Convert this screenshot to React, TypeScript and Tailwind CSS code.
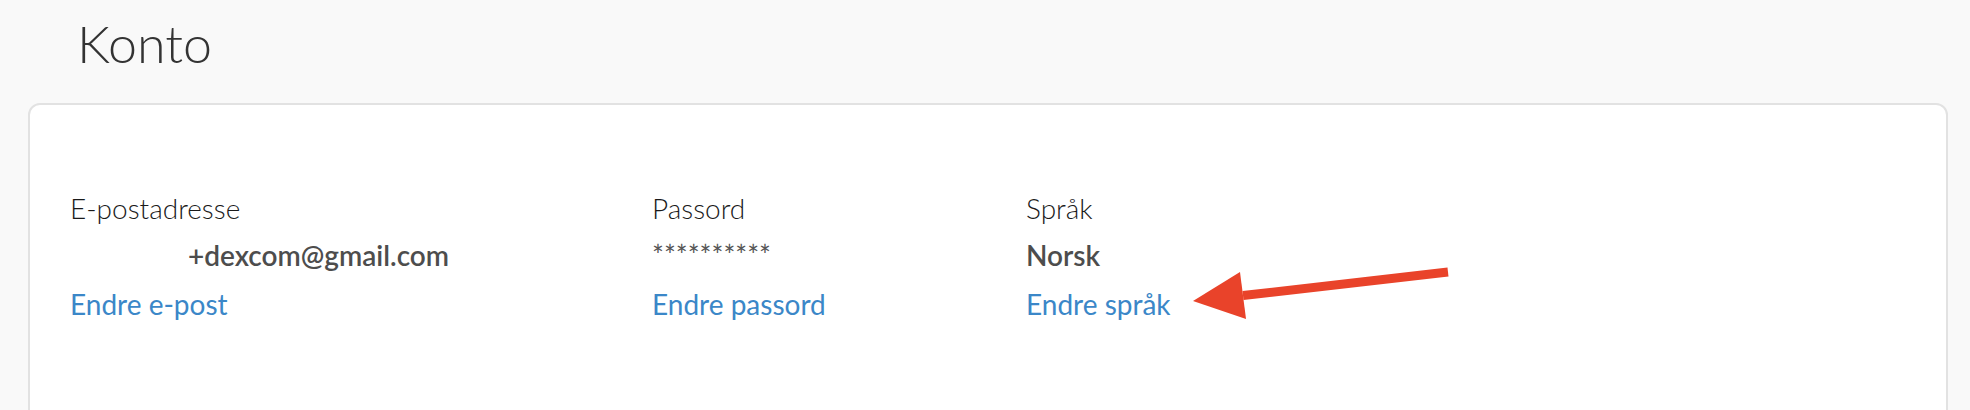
export default function App() {
  return (
    <div className="relative h-[410px] w-[1970px] overflow-hidden bg-[#f9f9f9] font-['Lato',sans-serif]">
      {/* Page title */}
      <h1 className="pl-[77px] pt-[13px] text-[52px] leading-[60px] font-light text-[#333333]">
        Konto
      </h1>

      {/* Account card */}
      <div className="mt-[30px] ml-[28px] mr-[22px] h-[320px] rounded-[12px] border-2 border-[#e2e2e2] bg-white pl-[40px] pt-[87px]">
        <div className="flex">
          <div className="w-[582px]">
            <p className="text-[28px] leading-[32px] font-light text-[#1a1a1a]">E-postadresse</p>
            <p className="mt-[15px] pl-[118px] text-[28px] leading-[32px] font-semibold text-[#4d4d4d]">
              +dexcom@gmail.com
            </p>
            <a className="mt-[17px] block text-[28px] leading-[32px] text-[#3b87c8]">Endre e-post</a>
          </div>

          <div className="w-[374px]">
            <p className="text-[28px] leading-[32px] font-light text-[#1a1a1a]">Passord</p>
            <p className="mt-[15px] text-[28px] leading-[32px] font-normal text-[#555555]">**********</p>
            <a className="mt-[17px] block text-[28px] leading-[32px] text-[#3b87c8]">Endre passord</a>
          </div>

          <div>
            <p className="text-[28px] leading-[32px] font-light text-[#1a1a1a]">Språk</p>
            <p className="mt-[15px] text-[28px] leading-[32px] font-semibold text-[#4d4d4d]">Norsk</p>
            <a className="mt-[17px] block text-[28px] leading-[32px] text-[#3b87c8]">Endre språk</a>
          </div>
        </div>
      </div>

      {/* Annotation arrow */}
      <svg className="pointer-events-none absolute left-0 top-0" width="1970" height="410">
        <line x1="1243" y1="295.5" x2="1448" y2="272" stroke="#e9432a" strokeWidth="9" />
        <polygon points="1193,301 1240,272 1246,319" fill="#e9432a" />
      </svg>
    </div>
  );
}
